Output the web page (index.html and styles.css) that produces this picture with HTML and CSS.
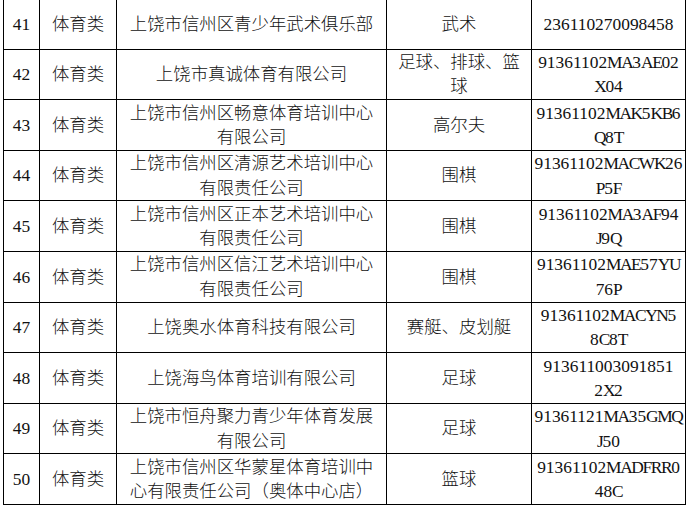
FILE: index.html
```html
<!DOCTYPE html>
<html lang="zh-CN">
<head>
<meta charset="utf-8">
<title>体育类机构名单</title>
<link rel="stylesheet" href="styles.css">
</head>
<body>
<table class="list">
  <colgroup>
    <col class="c-no">
    <col class="c-cat">
    <col class="c-name">
    <col class="c-sport">
    <col class="c-code">
  </colgroup>
  <tbody>
    <tr><td class="no">41</td><td>体育类</td><td>上饶市信州区青少年武术俱乐部</td><td>武术</td><td class="code">236110270098458</td></tr>
    <tr><td class="no">42</td><td>体育类</td><td>上饶市真诚体育有限公司</td><td>足球、排球、篮球</td><td class="code">91361102<span class="lt">MA</span>3<span class="lt">AE</span>02<br><span class="lt">X</span>04</td></tr>
    <tr><td class="no">43</td><td>体育类</td><td>上饶市信州区畅意体育培训中心有限公司</td><td>高尔夫</td><td class="code">91361102<span class="lt">MAK</span>5<span class="lt">KB</span>6<br><span class="lt">Q</span>8<span class="lt">T</span></td></tr>
    <tr><td class="no">44</td><td>体育类</td><td>上饶市信州区清源艺术培训中心有限责任公司</td><td>围棋</td><td class="code">91361102<span class="lt">MACWK</span>26<br><span class="lt">P</span>5<span class="lt">F</span></td></tr>
    <tr><td class="no">45</td><td>体育类</td><td>上饶市信州区正本艺术培训中心有限责任公司</td><td>围棋</td><td class="code">91361102<span class="lt">MA</span>3<span class="lt">AF</span>94<br><span class="lt">J</span>9<span class="lt">Q</span></td></tr>
    <tr><td class="no">46</td><td>体育类</td><td>上饶市信州区信江艺术培训中心有限责任公司</td><td>围棋</td><td class="code">91361102<span class="lt">MAE</span>57<span class="lt">YU</span><br>76<span class="lt">P</span></td></tr>
    <tr><td class="no">47</td><td>体育类</td><td>上饶奥水体育科技有限公司</td><td>赛艇、皮划艇</td><td class="code">91361102<span class="lt">MACYN</span>5<br>8<span class="lt">C</span>8<span class="lt">T</span></td></tr>
    <tr><td class="no">48</td><td>体育类</td><td>上饶海鸟体育培训有限公司</td><td>足球</td><td class="code">913611003091851<br>2<span class="lt">X</span>2</td></tr>
    <tr><td class="no">49</td><td>体育类</td><td>上饶市恒舟聚力青少年体育发展有限公司</td><td>足球</td><td class="code">91361121<span class="lt">MA</span>35<span class="lt">GMQ</span><br><span class="lt">J</span>50</td></tr>
    <tr><td class="no">50</td><td>体育类</td><td>上饶市信州区华蒙星体育培训中心有限责任公司（奥体中心店）</td><td>篮球</td><td class="code">91361102<span class="lt">MADFRR</span>0<br>48<span class="lt">C</span></td></tr>
  </tbody>
</table>
</body>
</html>
```

FILE: styles.css
```css
html, body {
  margin: 0;
  padding: 0;
  background: #ffffff;
}

body {
  font-family: "Liberation Serif", "Noto Sans CJK SC", serif;
  font-size: 17.4px;
  color: #111;
}

.list {
  border-collapse: collapse;
  table-layout: fixed;
  width: 682px;
  margin: -2px 0 0 3px;
}

.c-no { width: 36px; }
.c-cat { width: 77px; }
.c-name { width: 270px; }
.c-sport { width: 145px; }
.c-code { width: 154px; }

.list td {
  border: 1px solid #000;
  height: 49.6px;
  padding: 0 7px;
  text-align: center;
  vertical-align: middle;
  line-height: 24.3px;
  font-weight: 300;
  overflow: visible;
}

.list td.no {
  padding: 0;
}

.list td.code {
  padding: 0;
  white-space: nowrap;
  font-weight: 400;
}

.code .lt {
  letter-spacing: -1.4px;
}
```
